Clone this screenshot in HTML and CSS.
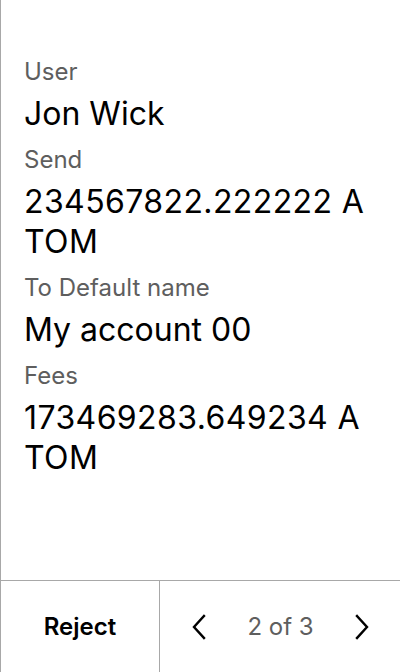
FILE: index.html
```html
<!DOCTYPE html>
<html>
<head>
<meta charset="utf-8">
<link rel="stylesheet" href="styles.css">
</head>
<body>
<div class="screen">
  <div class="content">
    <div class="field">
      <div class="label">User</div>
      <div class="value">Jon Wick</div>
    </div>
    <div class="field">
      <div class="label">Send</div>
      <div class="value amount">234567822.222222 A TOM</div>
    </div>
    <div class="field">
      <div class="label">To Default name</div>
      <div class="value">My account 00</div>
    </div>
    <div class="field">
      <div class="label">Fees</div>
      <div class="value amount">173469283.649234 A TOM</div>
    </div>
  </div>
  <div class="footer">
    <button class="reject">Reject</button>
    <div class="pager">
      <span class="chev">
        <svg width="14" height="26" viewBox="0 0 14 26"><path d="M12 2 L2 13 L12 24" fill="none" stroke="#000" stroke-width="2.4" stroke-linecap="square"/></svg>
      </span>
      <span class="count">2 of 3</span>
      <span class="chev">
        <svg width="14" height="26" viewBox="0 0 14 26"><path d="M2 2 L12 13 L2 24" fill="none" stroke="#000" stroke-width="2.4" stroke-linecap="square"/></svg>
      </span>
    </div>
  </div>
</div>
</body>
</html>
```
FILE: styles.css
```css
* { box-sizing: border-box; }
html, body { margin: 0; padding: 0; background: #fff; }
body { font-family: Inter, "Noto Sans", sans-serif; color: #000; }
.screen {
  width: 400px;
  height: 672px;
  display: flex;
  flex-direction: column;
  border-left: 1px solid #a8a8a8;
}
.content {
  flex: 1;
  padding: 56px 24px 0 23px;
  display: flex;
  flex-direction: column;
  gap: 10px;
}
.field { display: flex; flex-direction: column; gap: 6px; }
.label { font-size: 24px; line-height: 32px; color: #5e5e5e; }
.value {
  font-size: 32px;
  line-height: 40px;
  color: #000;
}
.amount { letter-spacing: 0.4px; }
.footer {
  height: 92px;
  border-top: 1px solid #a8a8a8;
  display: flex;
}
.reject {
  width: 159px;
  border: none;
  border-right: 1px solid #a8a8a8;
  background: none;
  font-family: inherit;
  font-size: 24px;
  font-weight: 600;
  color: #000;
  padding: 0;
}
.pager {
  flex: 1;
  display: flex;
  align-items: center;
  justify-content: space-between;
  padding: 0 31px 0 32px;
}
.chev { display: flex; }
.count { font-size: 24px; color: #5e5e5e; }
```
